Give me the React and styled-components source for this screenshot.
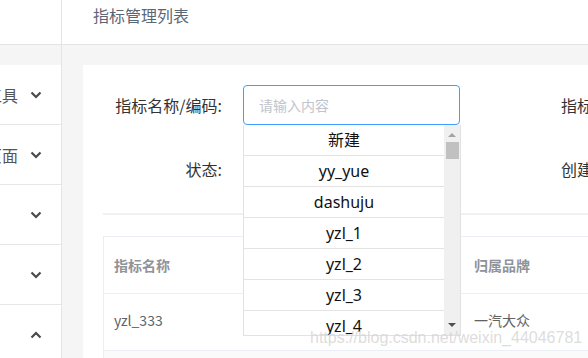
import React from 'react';
import styled, { createGlobalStyle } from 'styled-components';

const GlobalStyle = createGlobalStyle`
  html, body {
    margin: 0;
    padding: 0;
    width: 588px;
    height: 358px;
    overflow: hidden;
    background: #fff;
  }
  body {
    font-family: "Noto Sans CJK SC", "Noto Sans", sans-serif;
  }
  * {
    box-sizing: border-box;
  }
`;

const menuItems = [
  { label: '工具', open: false },
  { label: '页面', open: false },
  { label: '', open: false },
  { label: '', open: false },
  { label: '', open: true },
];

const options = ['新建', 'yy_yue', 'dashuju', 'yzl_1', 'yzl_2', 'yzl_3', 'yzl_4'];

const Chevron = ({ up }) => (
  <svg width="12" height="8" viewBox="0 0 12 8">
    <path
      d={up ? 'M1.5 6.5 L6 2 L10.5 6.5' : 'M1.5 1.5 L6 6 L10.5 1.5'}
      fill="none"
      stroke="#4a4a4a"
      strokeWidth="2.2"
    />
  </svg>
);

const App = () => (
  <Layout>
    <GlobalStyle />
    <Sidebar>
      <SideTop />
      <SideGap />
      {menuItems.map((item, i) => (
        <MenuItem key={i}>
          <MenuLabel>{item.label}</MenuLabel>
          <Chevron up={item.open} />
        </MenuItem>
      ))}
    </Sidebar>
    <Main>
      <Header>指标管理列表</Header>
      <Body>
        <Card>
          <FormGrid>
            <Label>指标名称/编码:</Label>
            <InputWrap>
              <Input placeholder="请输入内容" />
              <Dropdown>
                <OptionList>
                  {options.map(o => (
                    <Option key={o}>{o}</Option>
                  ))}
                </OptionList>
                <ScrollBar>
                  <Arrow />
                  <Thumb />
                  <Spacer />
                  <Arrow down />
                </ScrollBar>
              </Dropdown>
            </InputWrap>
            <SideLabel>指标名称:</SideLabel>
            <Label>状态:</Label>
            <div />
            <SideLabel>创建时间:</SideLabel>
          </FormGrid>
          <Divider />
          <Table>
            <HeadRow>
              <HeadCell>指标名称</HeadCell>
              <HeadCell>指标编码</HeadCell>
              <HeadCell>归属品牌</HeadCell>
            </HeadRow>
            <Row>
              <Cell>yzl_333</Cell>
              <Cell>yzl_333</Cell>
              <Cell>一汽大众</Cell>
            </Row>
            <Row $striped>
              <Cell />
              <Cell />
              <Cell />
            </Row>
          </Table>
        </Card>
      </Body>
      <Watermark>https://blog.csdn.net/weixin_44046781</Watermark>
    </Main>
  </Layout>
);

const Layout = styled.div`
  display: flex;
  width: 588px;
  height: 358px;
  overflow: hidden;
`;

const Sidebar = styled.div`
  width: 62px;
  flex-shrink: 0;
  border-right: 1px solid #e3e3e8;
  display: flex;
  flex-direction: column;
`;

const SideTop = styled.div`
  height: 45px;
  border-bottom: 1px solid #e3e3e8;
  flex-shrink: 0;
`;

const SideGap = styled.div`
  height: 20px;
  background: #f5f5f6;
  flex-shrink: 0;
`;

const MenuItem = styled.div`
  height: 60px;
  flex-shrink: 0;
  display: flex;
  align-items: center;
  gap: 12px;
  border-bottom: 1px solid #e6e6e6;
`;

/* the menu is scrolled sideways: only the tail of each label shows */
const MenuLabel = styled.span`
  width: 18px;
  flex-shrink: 0;
  overflow: hidden;
  direction: rtl;
  white-space: nowrap;
  font-size: 16px;
  color: #555;
  padding-top: 1px;
`;

const Main = styled.div`
  position: relative;
  flex: 1;
  display: flex;
  flex-direction: column;
  min-width: 0;
`;

const Header = styled.div`
  height: 45px;
  flex-shrink: 0;
  border-bottom: 1px solid #e3e3e8;
  padding: 5px 0 0 31px;
  font-size: 16px;
  line-height: 20px;
  color: #5b6675;
`;

const Body = styled.div`
  flex: 1;
  background: #f5f5f6;
  padding: 20px 0 0 21px;
  overflow: hidden;
`;

const Card = styled.div`
  background: #fff;
  height: 100%;
  padding-top: 20px;
  width: 600px;
`;

const FormGrid = styled.div`
  display: grid;
  grid-template-columns: 160px 217px 1fr;
  grid-auto-rows: 40px;
  row-gap: 24px;
  align-items: center;
`;

const Label = styled.div`
  text-align: right;
  padding-right: 21px;
  font-size: 16px;
  color: #333;
`;

const SideLabel = styled.div`
  padding-left: 101px;
  font-size: 16px;
  color: #333;
  white-space: nowrap;
`;

const InputWrap = styled.div`
  position: relative;
  height: 40px;
`;

const Input = styled.input`
  width: 100%;
  height: 40px;
  border: 1px solid #409eff;
  border-radius: 4px;
  padding: 0 15px;
  font-size: 14px;
  font-family: inherit;
  outline: none;
  &::placeholder {
    color: #c0c4cc;
  }
`;

const Dropdown = styled.div`
  position: absolute;
  left: 0;
  top: 40px;
  width: 218px;
  height: 211px;
  background: #fff;
  border: 1px solid #e2e2e2;
  border-top: none;
  display: flex;
  z-index: 2;
`;

const OptionList = styled.div`
  flex: 1;
  overflow: hidden;
`;

const Option = styled.div`
  height: 31px;
  line-height: 31px;
  text-align: center;
  font-size: 16px;
  color: #111;
  border-bottom: 1px solid #e3e3e3;
  font-family: "Noto Sans", "Noto Sans CJK SC", sans-serif;
`;

const ScrollBar = styled.div`
  width: 16px;
  background: #f0f0f0;
  display: flex;
  flex-direction: column;
  align-items: center;
  padding: 5px 0 5px;
`;

const Arrow = styled.div`
  width: 0;
  height: 0;
  margin: 3px 0;
  border-left: 4px solid transparent;
  border-right: 4px solid transparent;
  ${({ down }) =>
    down ? 'border-top: 4px solid #505050;' : 'border-bottom: 4px solid #a3a3a3;'}
`;

const Thumb = styled.div`
  width: 13px;
  height: 17px;
  margin-top: 2px;
  background: #c1c1c1;
`;

const Spacer = styled.div`
  flex: 1;
`;

const Divider = styled.div`
  margin: 24px 0 0 20px;
  height: 2px;
  background: #f0f1f3;
`;

const Table = styled.div`
  margin: 21px 0 0 20px;
  border-top: 1px solid #ebeef5;
  border-left: 1px solid #ebeef5;
`;

const HeadRow = styled.div`
  display: grid;
  grid-template-columns: 139px 221px 1fr;
  height: 57px;
  align-items: center;
  border-bottom: 1px solid #ebeef5;
`;

const Row = styled(HeadRow)`
  background: ${({ $striped }) => ($striped ? '#fafafa' : '#fff')};
  padding-bottom: 5px;
`;

const HeadCell = styled.div`
  padding-left: 10px;
  font-size: 14px;
  font-weight: bold;
  color: #909399;
`;

const Cell = styled.div`
  padding-left: 10px;
  font-size: 14px;
  color: #606266;
`;

const Watermark = styled.div`
  position: absolute;
  left: 248px;
  top: 329px;
  font-family: "Liberation Sans", Arial, sans-serif;
  font-size: 16px;
  color: rgba(212, 212, 212, 0.8);
  white-space: nowrap;
  pointer-events: none;
  z-index: 3;
`;

export default App;
